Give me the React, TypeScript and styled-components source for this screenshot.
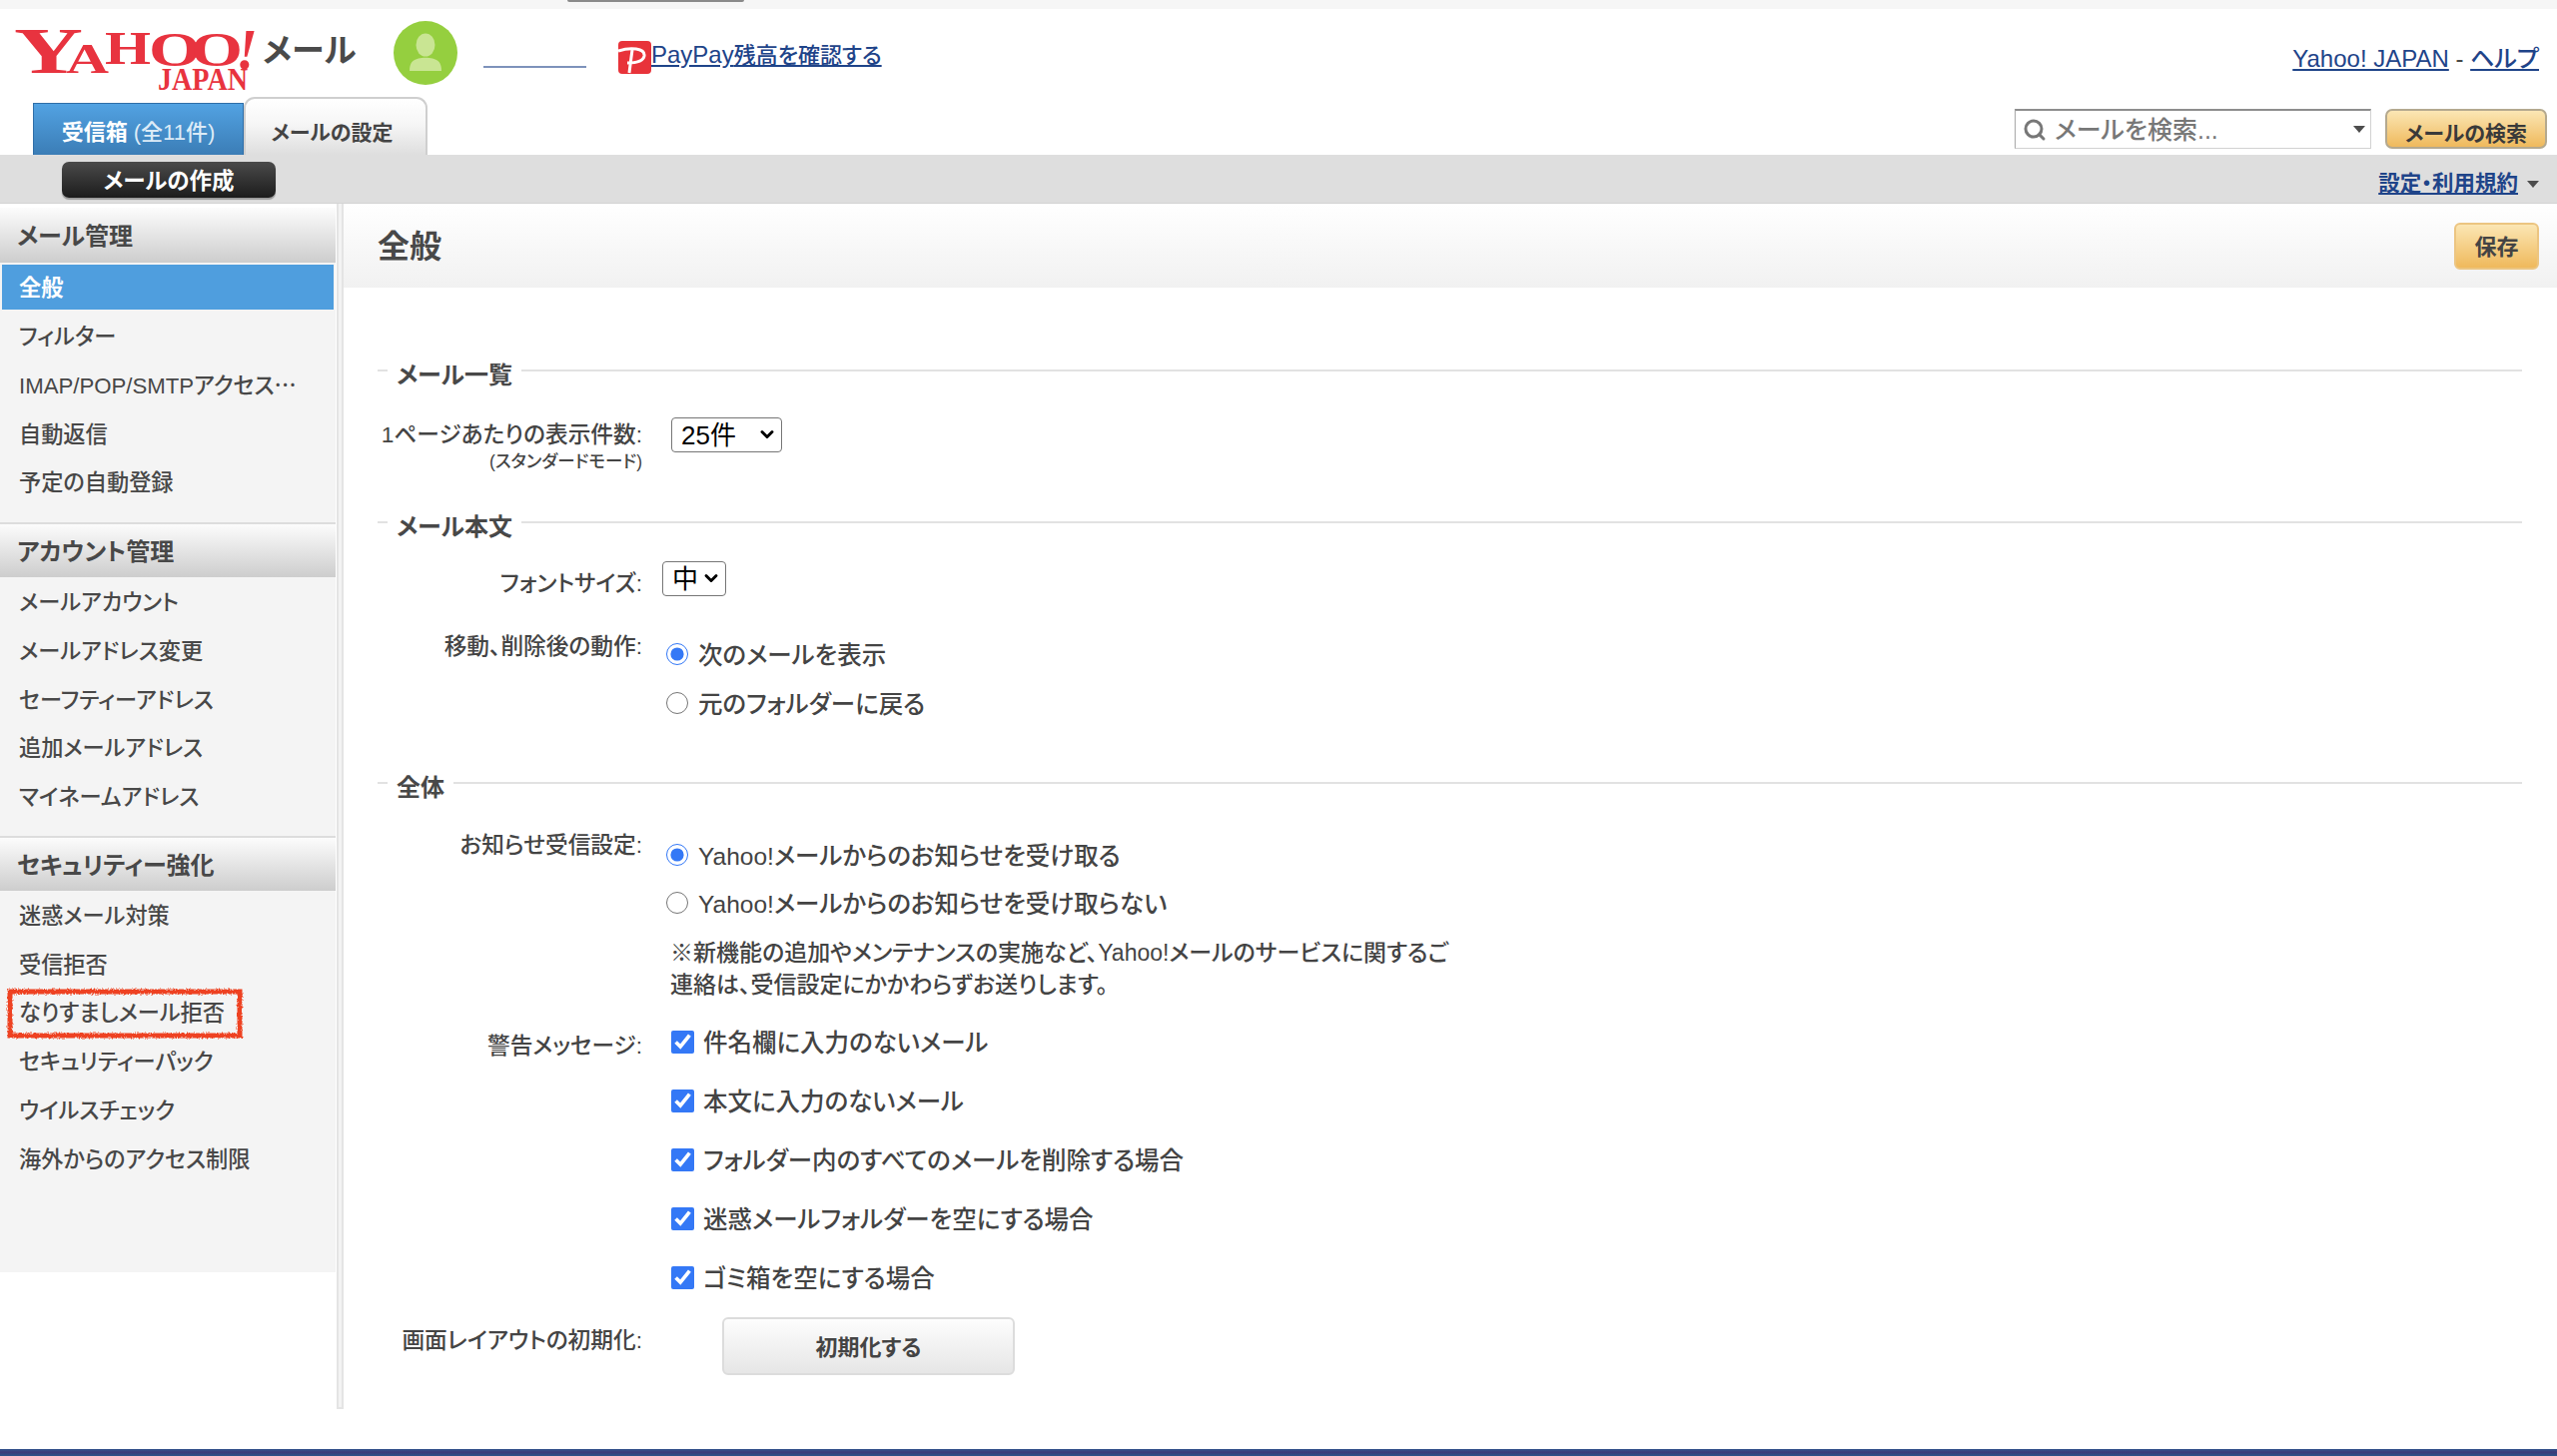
import React from 'react';
import styled, { createGlobalStyle } from 'styled-components';
import { ChevronDown, Search } from 'lucide-react';

const GlobalStyle = createGlobalStyle`
  html, body {
    margin: 0;
    padding: 0;
    background: #fff;
  }
  body {
    font-family: "Liberation Sans", "Noto Sans CJK JP", sans-serif;
    font-feature-settings: "palt";
    font-weight: 500;
    color: #444;
    font-size: 22px;
  }
  * {
    box-sizing: border-box;
  }
`;

const linkColor = '#1f4489';

const Page = styled.div`
  width: 2560px;
  height: 1458px;
  display: flex;
  flex-direction: column;
  overflow: hidden;
`;

const TopStrip = styled.div`
  height: 9px;
  background: #f6f6f6;
  padding-left: 568px;
`;

const StripPill = styled.div`
  width: 177px;
  height: 2px;
  background: #8a8a8a;
  border-radius: 0 0 4px 4px;
`;

const TopRow = styled.div`
  height: 88px;
  display: flex;
  align-items: flex-start;
  padding: 0 18px 0 13px;
`;

const LogoMark = styled.svg`
  width: 245px;
  height: 62px;
  margin-top: 21px;
  flex: none;
  overflow: visible;
`;

const ServiceName = styled.div`
  margin: 20px 0 0 5px;
  width: 96px;
  font-size: 33px;
  font-weight: 700;
  line-height: 44px;
  color: #4a4a4a;
  white-space: nowrap;
`;

const Avatar = styled.svg`
  width: 64px;
  height: 64px;
  margin: 12px 0 0 35px;
  flex: none;
`;

const BlankName = styled.div`
  width: 103px;
  height: 2px;
  background: #7d92bb;
  margin: 57px 0 0 26px;
`;

const PayIcon = styled.svg`
  width: 33px;
  height: 33px;
  margin: 32px 0 0 32px;
  flex: none;
`;

const TextLink = styled.a`
  color: ${linkColor};
  text-decoration: underline;
  white-space: nowrap;
`;

const PayLink = styled(TextLink)`
  font-size: 24px;
  line-height: 32px;
  margin-top: 30px;
`;

const PayLinkRest = styled.span`
  font-size: 22px;
`;

const HelpLinks = styled.div`
  margin: 34px 0 0 auto;
  font-size: 24px;
  line-height: 32px;
  color: #444;
  white-space: nowrap;
`;

const TabRow = styled.div`
  height: 58px;
  display: flex;
  align-items: flex-end;
  padding: 0 10px 0 33px;
`;

const InboxTab = styled.div`
  width: 211px;
  height: 52px;
  padding-top: 12px;
  text-align: center;
  font-size: 22px;
  line-height: 34px;
  color: #fff;
  background: linear-gradient(#52a2e2, #3b7db6);
  border: 1px solid #2f6ea8;
  border-bottom: 0;
  white-space: nowrap;
`;

const InboxName = styled.b`
  font-weight: 700;
`;

const InboxCount = styled.span`
  color: #dcebf7;
  margin-left: 6px;
`;

const SettingsTab = styled.div`
  width: 184px;
  height: 58px;
  padding: 17px 7px 0 0;
  text-align: center;
  font-size: 21px;
  font-weight: 700;
  line-height: 34px;
  color: #444;
  background: linear-gradient(#fff, #f6f6f6 45%, #dedede);
  border: 2px solid #cfcfcf;
  border-bottom: 0;
  border-radius: 11px 11px 0 0;
`;

const SearchBox = styled.div`
  margin: 12px 0 0 auto;
  align-self: flex-start;
  width: 357px;
  height: 40px;
  display: flex;
  align-items: center;
  padding: 0 5px 0 7px;
  background: #fff;
  border: 1px solid #d2d2d2;
  border-top: 2px solid #8d8d8d;
  border-left: 1px solid #a8a8a8;
  color: #777;
  font-size: 25px;
`;

const SearchText = styled.span`
  margin: 0 0 3px 8px;
  flex: 1;
`;

const Caret = styled.span`
  width: 0;
  height: 0;
  border-left: 6px solid transparent;
  border-right: 6px solid transparent;
  border-top: 7px solid #4d4d4d;
`;

const SearchButton = styled.button`
  margin: 12px 0 0 14px;
  align-self: flex-start;
  width: 162px;
  height: 40px;
  padding: 5px 0 0;
  font: 700 21px "Liberation Sans", "Noto Sans CJK JP", sans-serif;
  font-feature-settings: "palt";
  color: #3a3a3a;
  background: linear-gradient(#fbe6b4, #efb95c);
  border: 2px solid #b4a98f;
  border-radius: 7px;
`;

const ActionBar = styled.div`
  height: 49px;
  display: flex;
  align-items: flex-start;
  padding: 0 18px 0 62px;
  background: #dedede;
  border-bottom: 1px solid #d4d4d4;
`;

const ComposeButton = styled.button`
  margin-top: 7px;
  width: 214px;
  height: 36px;
  padding: 0 0 3px;
  font: 700 22.5px "Liberation Sans", "Noto Sans CJK JP", sans-serif;
  font-feature-settings: "palt";
  color: #fff;
  background: linear-gradient(#4a4a4a, #1c1c1c);
  border: 0;
  border-radius: 7px;
  box-shadow: 0 2px 1px #9a9a9a;
`;

const TermsMenu = styled.div`
  margin: 12px 0 0 auto;
  display: flex;
  align-items: center;
  gap: 9px;
  font-size: 21.5px;
  font-weight: 700;
  line-height: 34px;
`;

const Main = styled.div`
  flex: 1;
  display: flex;
  align-items: flex-start;
`;

const LeftColumn = styled.div`
  width: 344px;
  flex: none;
  display: flex;
  align-items: flex-start;
`;

const Sidebar = styled.nav`
  width: 336px;
  height: 1066px;
  margin-top: 4px;
  background: #f4f4f4;
`;

const SideStrip = styled.div`
  width: 7px;
  height: 1207px;
  margin-left: 1px;
  background: #f3f3f3;
  border: 2px solid #e4e4e4;
  border-top: 0;
`;

const NavGroup = styled.div<{ $pad: number }>`
  padding-bottom: ${(p) => p.$pad}px;
`;

const NavHeading = styled.div<{ $first?: boolean }>`
  height: 55px;
  display: flex;
  align-items: center;
  padding: 0 0 2px 17px;
  font-size: 24px;
  font-weight: 700;
  color: #484848;
  background: linear-gradient(#fcfcfc, #cdcdcd);
  border-top: ${(p) => (p.$first ? 0 : '2px solid #dddddd')};
`;

const NavItem = styled.div<{ $active?: boolean }>`
  position: relative;
  height: 48.75px;
  display: flex;
  align-items: center;
  padding: 0 0 2px 17px;
  font-size: 22.2px;
  white-space: nowrap;
  border: 2px solid transparent;
  background-clip: padding-box;
  background-color: ${(p) => (p.$active ? '#4f9ede' : 'transparent')};
  color: ${(p) => (p.$active ? '#fff' : '#484848')};
  font-weight: ${(p) => (p.$active ? 700 : 500)};
`;

const CjkDots = styled.span`
  font-family: "Noto Sans CJK JP", sans-serif;
  font-feature-settings: normal;
`;

const Highlight = styled.svg`
  position: absolute;
  left: 2px;
  top: -3px;
  width: 244px;
  height: 54px;
  overflow: visible;
`;

const Content = styled.div`
  flex: 1;
  min-width: 0;
`;

const TitleBar = styled.div`
  height: 84px;
  display: flex;
  align-items: flex-start;
  justify-content: space-between;
  padding: 0 18px 0 34px;
  background: linear-gradient(#fff, #f1f1f1);
`;

const PageTitle = styled.h1`
  margin: 19px 0 0;
  font-size: 32px;
  font-weight: 700;
  line-height: 48px;
  color: #484848;
`;

const SaveButton = styled.button`
  margin-top: 19px;
  width: 85px;
  height: 47px;
  padding: 0 0 3px;
  font: 700 22px "Liberation Sans", "Noto Sans CJK JP", sans-serif;
  color: #444;
  background: linear-gradient(#fbe6b4, #efb95c);
  border: 2px solid #ecc581;
  border-radius: 6px;
`;

const Body = styled.div`
  padding: 0 35px 0 34px;
`;

const SectionHead = styled.div<{ $top: number }>`
  height: 30px;
  margin-top: ${(p) => p.$top}px;
  display: flex;
  align-items: center;
  gap: 9px;
  font-size: 24px;
  font-weight: 700;
  color: #484848;
`;

const HeadText = styled.span`
  margin-bottom: 4px;
`;

const HeadDash = styled.span`
  width: 10px;
  height: 2px;
  margin-bottom: 8px;
  background: #e2e2e2;
`;

const HeadRule = styled.span`
  flex: 1;
  height: 2px;
  margin-bottom: 8px;
  background: #e2e2e2;
`;

const Row = styled.div<{ $top: number }>`
  margin-top: ${(p) => p.$top}px;
  display: grid;
  grid-template-columns: 265px 1fr;
  align-items: start;
`;

const FieldLabel = styled.div<{ $pad: number }>`
  padding-top: ${(p) => p.$pad}px;
  text-align: right;
  font-size: 22.7px;
  line-height: 30px;
  white-space: nowrap;
`;

const SubLabel = styled(FieldLabel)`
  font-size: 17.5px;
  line-height: 24px;
`;

const DropdownWrap = styled.div<{ $left: number; $width: number }>`
  position: relative;
  margin-left: ${(p) => p.$left}px;
  width: ${(p) => p.$width}px;
  height: 35px;
`;

const Dropdown = styled.select`
  display: block;
  width: 100%;
  height: 100%;
  padding: 0 0 0 9px;
  appearance: none;
  font: 26px "Liberation Sans", "Noto Sans CJK JP", sans-serif;
  color: #000;
  background: #fff;
  border: 1px solid #767676;
  border-radius: 4px;
`;

const DropdownChevron = styled(ChevronDown)`
  position: absolute;
  right: 5px;
  top: 7px;
  pointer-events: none;
`;

const OptionList = styled.div<{ $gap: number; $pad: number }>`
  display: flex;
  flex-direction: column;
  gap: ${(p) => p.$gap}px;
  padding-top: ${(p) => p.$pad}px;
`;

const RadioLine = styled.label`
  height: 30px;
  display: flex;
  align-items: center;
  gap: 10px;
  margin-left: 24px;
  font-size: 24.5px;
  white-space: nowrap;
`;

const Radio = styled.input`
  width: 22px;
  height: 22px;
  margin: 0;
  accent-color: #3478f6;
`;

const CheckLine = styled.label`
  height: 30px;
  display: flex;
  align-items: center;
  gap: 9px;
  margin-left: 29px;
  font-size: 24.5px;
  white-space: nowrap;
`;

const Check = styled.input`
  width: 23px;
  height: 23px;
  margin: 0;
  accent-color: #3478f6;
`;

const OptionText = styled.span`
  margin-bottom: 2px;
`;

const Note = styled.p`
  width: 800px;
  margin: 19px 0 0 28px;
  font-size: 23px;
  line-height: 32px;
`;

const ResetButton = styled.button`
  display: block;
  margin-left: 80px;
  width: 293px;
  height: 58px;
  padding: 0 0 3px;
  font: 700 22px "Liberation Sans", "Noto Sans CJK JP", sans-serif;
  font-feature-settings: "palt";
  color: #444;
  background: linear-gradient(#fdfdfd, #e6e6e6);
  border: 2px solid #dcdcdc;
  border-radius: 6px;
`;

const Footer = styled.div`
  height: 7px;
  flex: none;
  background: linear-gradient(#33578f, #3d3a78 45%, #2c5288);
`;

const navGroups = [
  {
    title: 'メール管理',
    pad: 16,
    items: ['全般', 'フィルター', 'IMAP/POP/SMTPアクセス…', '自動返信', '予定の自動登録'],
  },
  {
    title: 'アカウント管理',
    pad: 15,
    items: ['メールアカウント', 'メールアドレス変更', 'セーフティーアドレス', '追加メールアドレス', 'マイネームアドレス'],
  },
  {
    title: 'セキュリティー強化',
    pad: 0,
    items: ['迷惑メール対策', '受信拒否', 'なりすましメール拒否', 'セキュリティーパック', 'ウイルスチェック', '海外からのアクセス制限'],
  },
];

const warnings = [
  '件名欄に入力のないメール',
  '本文に入力のないメール',
  'フォルダー内のすべてのメールを削除する場合',
  '迷惑メールフォルダーを空にする場合',
  'ゴミ箱を空にする場合',
];

const Logo = () => (
  <LogoMark viewBox="0 0 245 62">
    <g fill="#e8333f" fontFamily="Liberation Serif" fontWeight="700">
      <text x="1" y="43" fontSize="66" textLength="69" lengthAdjust="spacingAndGlyphs">Y</text>
      <text x="53" y="43" fontSize="42" textLength="43" lengthAdjust="spacingAndGlyphs">A</text>
      <text x="92" y="34" fontSize="46" textLength="46" lengthAdjust="spacingAndGlyphs">H</text>
      <text x="136" y="36" fontSize="49" textLength="52" lengthAdjust="spacingAndGlyphs">O</text>
      <text x="178" y="36" fontSize="49" textLength="52" lengthAdjust="spacingAndGlyphs">O</text>
      <text x="223" y="39" fontSize="56" fontStyle="italic">!</text>
      <text x="145" y="60" fontSize="32" textLength="90" lengthAdjust="spacingAndGlyphs">JAPAN</text>
    </g>
  </LogoMark>
);

const UserIcon = () => (
  <Avatar viewBox="0 0 64 64">
    <circle cx="32" cy="32" r="32" fill="#95cf3f" />
    <ellipse cx="32" cy="24" rx="9.5" ry="11.5" fill="#c9e593" />
    <path d="M16 50c0-8 3-11 9-12.500 4-1 10-1 14 0 6 1.500 9 4.500 9 12.500z" fill="#c9e593" />
  </Avatar>
);

const PayPayIcon = () => (
  <PayIcon viewBox="0 0 33 33">
    <rect width="33" height="33" rx="4" fill="#e8333a" />
    <path d="M0 10c12-4 27-3 26 5-1 6-10 7-17 7" fill="none" stroke="#fff" strokeWidth="3" />
    <path d="M14 9c-1 7-2 15-3 23" fill="none" stroke="#fff" strokeWidth="3" />
  </PayIcon>
);

const RoughBox = () => (
  <Highlight viewBox="0 0 244 54">
    <filter id="rough" x="-5%" y="-20%" width="110%" height="140%">
      <feTurbulence type="fractalNoise" baseFrequency="0.6" numOctaves="2" seed="4" />
      <feDisplacementMap in="SourceGraphic" scale="4" />
    </filter>
    <rect x="6" y="5" width="230" height="44" fill="none" stroke="#ee4222" strokeWidth="5" filter="url(#rough)" />
  </Highlight>
);

const NavLabel = ({ text }: { text: string }) =>
  text.endsWith('…') ? (
    <>
      {text.slice(0, -1)}
      <CjkDots>…</CjkDots>
    </>
  ) : (
    <>{text}</>
  );

const Sidenav = () => (
  <Sidebar>
    {navGroups.map((group, g) => (
      <NavGroup key={group.title} $pad={group.pad}>
        <NavHeading $first={g === 0}>{group.title}</NavHeading>
        {group.items.map((item) => (
          <NavItem key={item} $active={item === '全般'}>
            <NavLabel text={item} />
            {item === 'なりすましメール拒否' && <RoughBox />}
          </NavItem>
        ))}
      </NavGroup>
    ))}
  </Sidebar>
);

const SectionTitle = ({ top, children }: { top: number; children: React.ReactNode }) => (
  <SectionHead $top={top}>
    <HeadDash />
    <HeadText>{children}</HeadText>
    <HeadRule />
  </SectionHead>
);

const SelectBox = ({ left, width, value }: { left: number; width: number; value: string }) => (
  <DropdownWrap $left={left} $width={width}>
    <Dropdown defaultValue={value}>
      <option value={value}>{value}</option>
    </Dropdown>
    <DropdownChevron size={20} color="#000" strokeWidth={3.5} />
  </DropdownWrap>
);

export default function App() {
  return (
    <Page>
      <GlobalStyle />
      <TopStrip>
        <StripPill />
      </TopStrip>
      <TopRow>
        <Logo />
        <ServiceName>メール</ServiceName>
        <UserIcon />
        <BlankName />
        <PayPayIcon />
        <PayLink href="#">
          PayPay<PayLinkRest>残高を確認する</PayLinkRest>
        </PayLink>
        <HelpLinks>
          <TextLink href="#">Yahoo! JAPAN</TextLink> - <TextLink href="#">ヘルプ</TextLink>
        </HelpLinks>
      </TopRow>
      <TabRow>
        <InboxTab>
          <InboxName>受信箱</InboxName>
          <InboxCount>(全11件)</InboxCount>
        </InboxTab>
        <SettingsTab>メールの設定</SettingsTab>
        <SearchBox>
          <Search size={24} color="#777" strokeWidth={3} />
          <SearchText>メールを検索...</SearchText>
          <Caret />
        </SearchBox>
        <SearchButton>メールの検索</SearchButton>
      </TabRow>
      <ActionBar>
        <ComposeButton>メールの作成</ComposeButton>
        <TermsMenu>
          <TextLink href="#">設定・利用規約</TextLink>
          <Caret />
        </TermsMenu>
      </ActionBar>
      <Main>
        <LeftColumn>
          <Sidenav />
          <SideStrip />
        </LeftColumn>
        <Content>
          <TitleBar>
            <PageTitle>全般</PageTitle>
            <SaveButton>保存</SaveButton>
          </TitleBar>
          <Body>
            <SectionTitle top={72}>メール一覧</SectionTitle>
            <Row $top={28}>
              <div>
                <FieldLabel $pad={2}>1ページあたりの表示件数:</FieldLabel>
                <SubLabel $pad={0}>(スタンダードモード)</SubLabel>
              </div>
              <SelectBox left={29} width={111} value="25件" />
            </Row>
            <SectionTitle top={38}>メール本文</SectionTitle>
            <Row $top={20}>
              <FieldLabel $pad={7}>フォントサイズ:</FieldLabel>
              <SelectBox left={20} width={64} value="中" />
            </Row>
            <Row $top={33}>
              <FieldLabel $pad={0}>移動、削除後の動作:</FieldLabel>
              <OptionList $gap={19} $pad={8}>
                <RadioLine>
                  <Radio type="radio" name="after" defaultChecked />
                  <OptionText>次のメールを表示</OptionText>
                </RadioLine>
                <RadioLine>
                  <Radio type="radio" name="after" />
                  <OptionText>元のフォルダーに戻る</OptionText>
                </RadioLine>
              </OptionList>
            </Row>
            <SectionTitle top={54}>全体</SectionTitle>
            <Row $top={28}>
              <FieldLabel $pad={0}>お知らせ受信設定:</FieldLabel>
              <div>
                <OptionList $gap={18} $pad={10}>
                  <RadioLine>
                    <Radio type="radio" name="notice" defaultChecked />
                    <OptionText>Yahoo!メールからのお知らせを受け取る</OptionText>
                  </RadioLine>
                  <RadioLine>
                    <Radio type="radio" name="notice" />
                    <OptionText>Yahoo!メールからのお知らせを受け取らない</OptionText>
                  </RadioLine>
                </OptionList>
                <Note>
                  ※新機能の追加やメンテナンスの実施など、Yahoo!メールのサービスに関するご
                  <br />
                  連絡は、受信設定にかかわらずお送りします。
                </Note>
              </div>
            </Row>
            <Row $top={26}>
              <FieldLabel $pad={4}>警告メッセージ:</FieldLabel>
              <OptionList $gap={29} $pad={0}>
                {warnings.map((w) => (
                  <CheckLine key={w}>
                    <Check type="checkbox" defaultChecked />
                    <OptionText>{w}</OptionText>
                  </CheckLine>
                ))}
              </OptionList>
            </Row>
            <Row $top={25}>
              <FieldLabel $pad={8}>画面レイアウトの初期化:</FieldLabel>
              <ResetButton>初期化する</ResetButton>
            </Row>
          </Body>
        </Content>
      </Main>
      <Footer />
    </Page>
  );
}
